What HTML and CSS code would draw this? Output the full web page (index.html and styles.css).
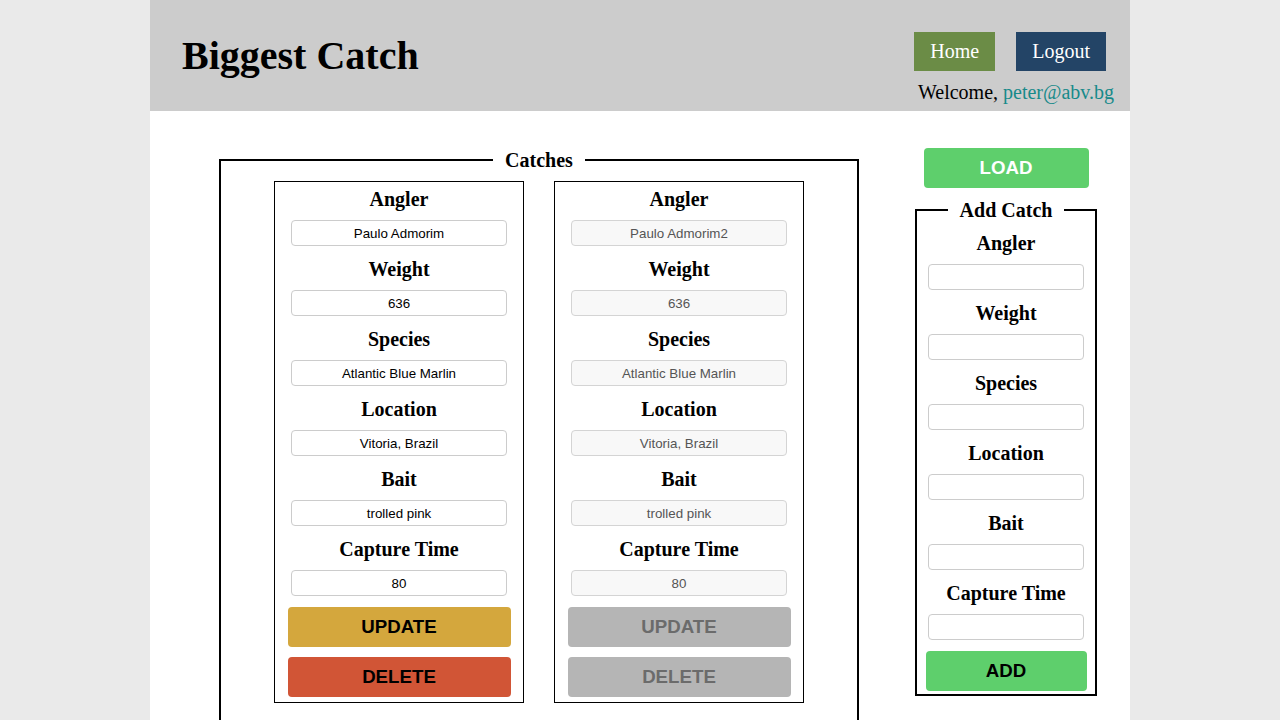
FILE: index.html
```html
<!DOCTYPE html>
<html lang="en">
<head>
<meta charset="utf-8">
<title>Biggest Catch</title>
<link rel="stylesheet" href="styles.css">
</head>
<body>
<div class="page">
  <header class="header">
    <h1 class="title">Biggest Catch</h1>
    <nav class="nav">
      <div class="nav-buttons">
        <a class="nav-btn home">Home</a>
        <a class="nav-btn logout">Logout</a>
      </div>
      <p class="welcome">Welcome, <span class="email">peter@abv.bg</span></p>
    </nav>
  </header>
  <main class="main">
    <fieldset class="catches">
      <legend class="legend legend-center">Catches</legend>
      <div class="cards">
        <div class="card">
          <div class="label">Angler</div>
          <input class="field" type="text" value="Paulo Admorim">
          <div class="label">Weight</div>
          <input class="field" type="text" value="636">
          <div class="label">Species</div>
          <input class="field" type="text" value="Atlantic Blue Marlin">
          <div class="label">Location</div>
          <input class="field" type="text" value="Vitoria, Brazil">
          <div class="label">Bait</div>
          <input class="field" type="text" value="trolled pink">
          <div class="label">Capture Time</div>
          <input class="field" type="text" value="80">
          <button class="btn card-btn update">UPDATE</button>
          <button class="btn card-btn delete">DELETE</button>
        </div>
        <div class="card">
          <div class="label">Angler</div>
          <input class="field" type="text" value="Paulo Admorim2" disabled>
          <div class="label">Weight</div>
          <input class="field" type="text" value="636" disabled>
          <div class="label">Species</div>
          <input class="field" type="text" value="Atlantic Blue Marlin" disabled>
          <div class="label">Location</div>
          <input class="field" type="text" value="Vitoria, Brazil" disabled>
          <div class="label">Bait</div>
          <input class="field" type="text" value="trolled pink" disabled>
          <div class="label">Capture Time</div>
          <input class="field" type="text" value="80" disabled>
          <button class="btn card-btn update" disabled>UPDATE</button>
          <button class="btn card-btn delete" disabled>DELETE</button>
        </div>
      </div>
    </fieldset>
    <aside class="side">
      <button class="btn load">LOAD</button>
      <fieldset class="add">
        <legend class="legend legend-center">Add Catch</legend>
        <div class="label">Angler</div>
        <input class="field add-field" type="text">
        <div class="label">Weight</div>
        <input class="field add-field" type="text">
        <div class="label">Species</div>
        <input class="field add-field" type="text">
        <div class="label">Location</div>
        <input class="field add-field" type="text">
        <div class="label">Bait</div>
        <input class="field add-field" type="text">
        <div class="label">Capture Time</div>
        <input class="field add-field" type="text">
        <button class="btn add-btn">ADD</button>
      </fieldset>
    </aside>
  </main>
</div>
</body>
</html>
```

FILE: styles.css
```css
* {
  box-sizing: border-box;
}

html, body {
  margin: 0;
  padding: 0;
}

body {
  background: #eaeaea;
  font-family: "Liberation Serif", "Times New Roman", serif;
  color: #000;
}

.page {
  width: 980px;
  margin: 0 auto;
  background: #ffffff;
  min-height: 100vh;
  overflow: hidden;
}

/* Header */
.header {
  height: 111px;
  background: #cccccc;
  display: flex;
  justify-content: space-between;
  align-items: center;
  padding: 0 16px 0 32px;
}

.title {
  margin: 0;
  font-size: 40px;
  font-weight: bold;
  line-height: 46px;
}

.nav {
  align-self: flex-start;
  padding-top: 32px;
  display: flex;
  flex-direction: column;
  align-items: flex-end;
}

.nav-buttons {
  display: flex;
  gap: 21px;
  margin-right: 8px;
}

.nav-btn {
  display: block;
  padding: 8px 16px;
  font-size: 20px;
  line-height: 23px;
  color: #ffffff;
  text-decoration: none;
}

.home {
  background: #6b8c46;
}

.logout {
  background: #234466;
}

.welcome {
  margin: 10px 0 0;
  font-size: 20px;
  line-height: 23px;
}

.email {
  color: #178a8a;
}

/* Main */
.main {
  display: flex;
  align-items: flex-start;
  gap: 56px;
  padding: 37px 0 0 69px;
}

.legend {
  font-size: 20px;
  font-weight: bold;
  line-height: 24px;
  padding: 0 12px;
}

.legend-center {
  margin-left: auto;
  margin-right: auto;
}

.catches {
  width: 640px;
  margin: 0;
  border: 2px solid #000;
  padding: 9px 0 30px;
  min-width: 0;
}

.cards {
  display: flex;
  justify-content: center;
  gap: 30px;
}

.card {
  width: 250px;
  border: 1px solid #000;
  padding: 5px 0 5px;
  display: flex;
  flex-direction: column;
  align-items: center;
}

.label {
  font-size: 20px;
  font-weight: bold;
  line-height: 24px;
  text-align: center;
  margin-bottom: 9px;
}

.field {
  display: block;
  width: 216px;
  height: 26px;
  margin: 0 0 11px;
  border: 1px solid #cccccc;
  border-radius: 4px;
  background: #ffffff;
  font-family: "Liberation Sans", Arial, sans-serif;
  font-size: 13.333px;
  color: #000;
  text-align: center;
  padding: 0 4px;
}

.field:disabled {
  background: #f8f8f8;
  color: #555555;
  border-color: #d4d4d4;
}

.btn {
  display: block;
  height: 40px;
  border: none;
  border-radius: 4px;
  font-family: "Liberation Sans", Arial, sans-serif;
  font-size: 18.7px;
  font-weight: bold;
  color: #000;
  padding: 0;
  cursor: pointer;
}

.card-btn {
  width: 223px;
}

.update {
  background: #d4a73d;
  margin-bottom: 10px;
}

.delete {
  background: #d15536;
}

.card-btn:disabled {
  background: #b5b5b5;
  color: #6b6b6b;
}

/* Side */
.side {
  width: 182px;
  display: flex;
  flex-direction: column;
  align-items: center;
}

.load {
  width: 165px;
  background: #5ecf6c;
  color: #ffffff;
  margin-bottom: 10px;
}

.add {
  width: 182px;
  margin: 0;
  border: 2px solid #000;
  padding: 9px 0 3px;
  display: flex;
  flex-direction: column;
  align-items: center;
  min-width: 0;
}

.add-field {
  width: 156px;
}

.add-btn {
  width: 161px;
  background: #5ecf6c;
  color: #000;
}
```
